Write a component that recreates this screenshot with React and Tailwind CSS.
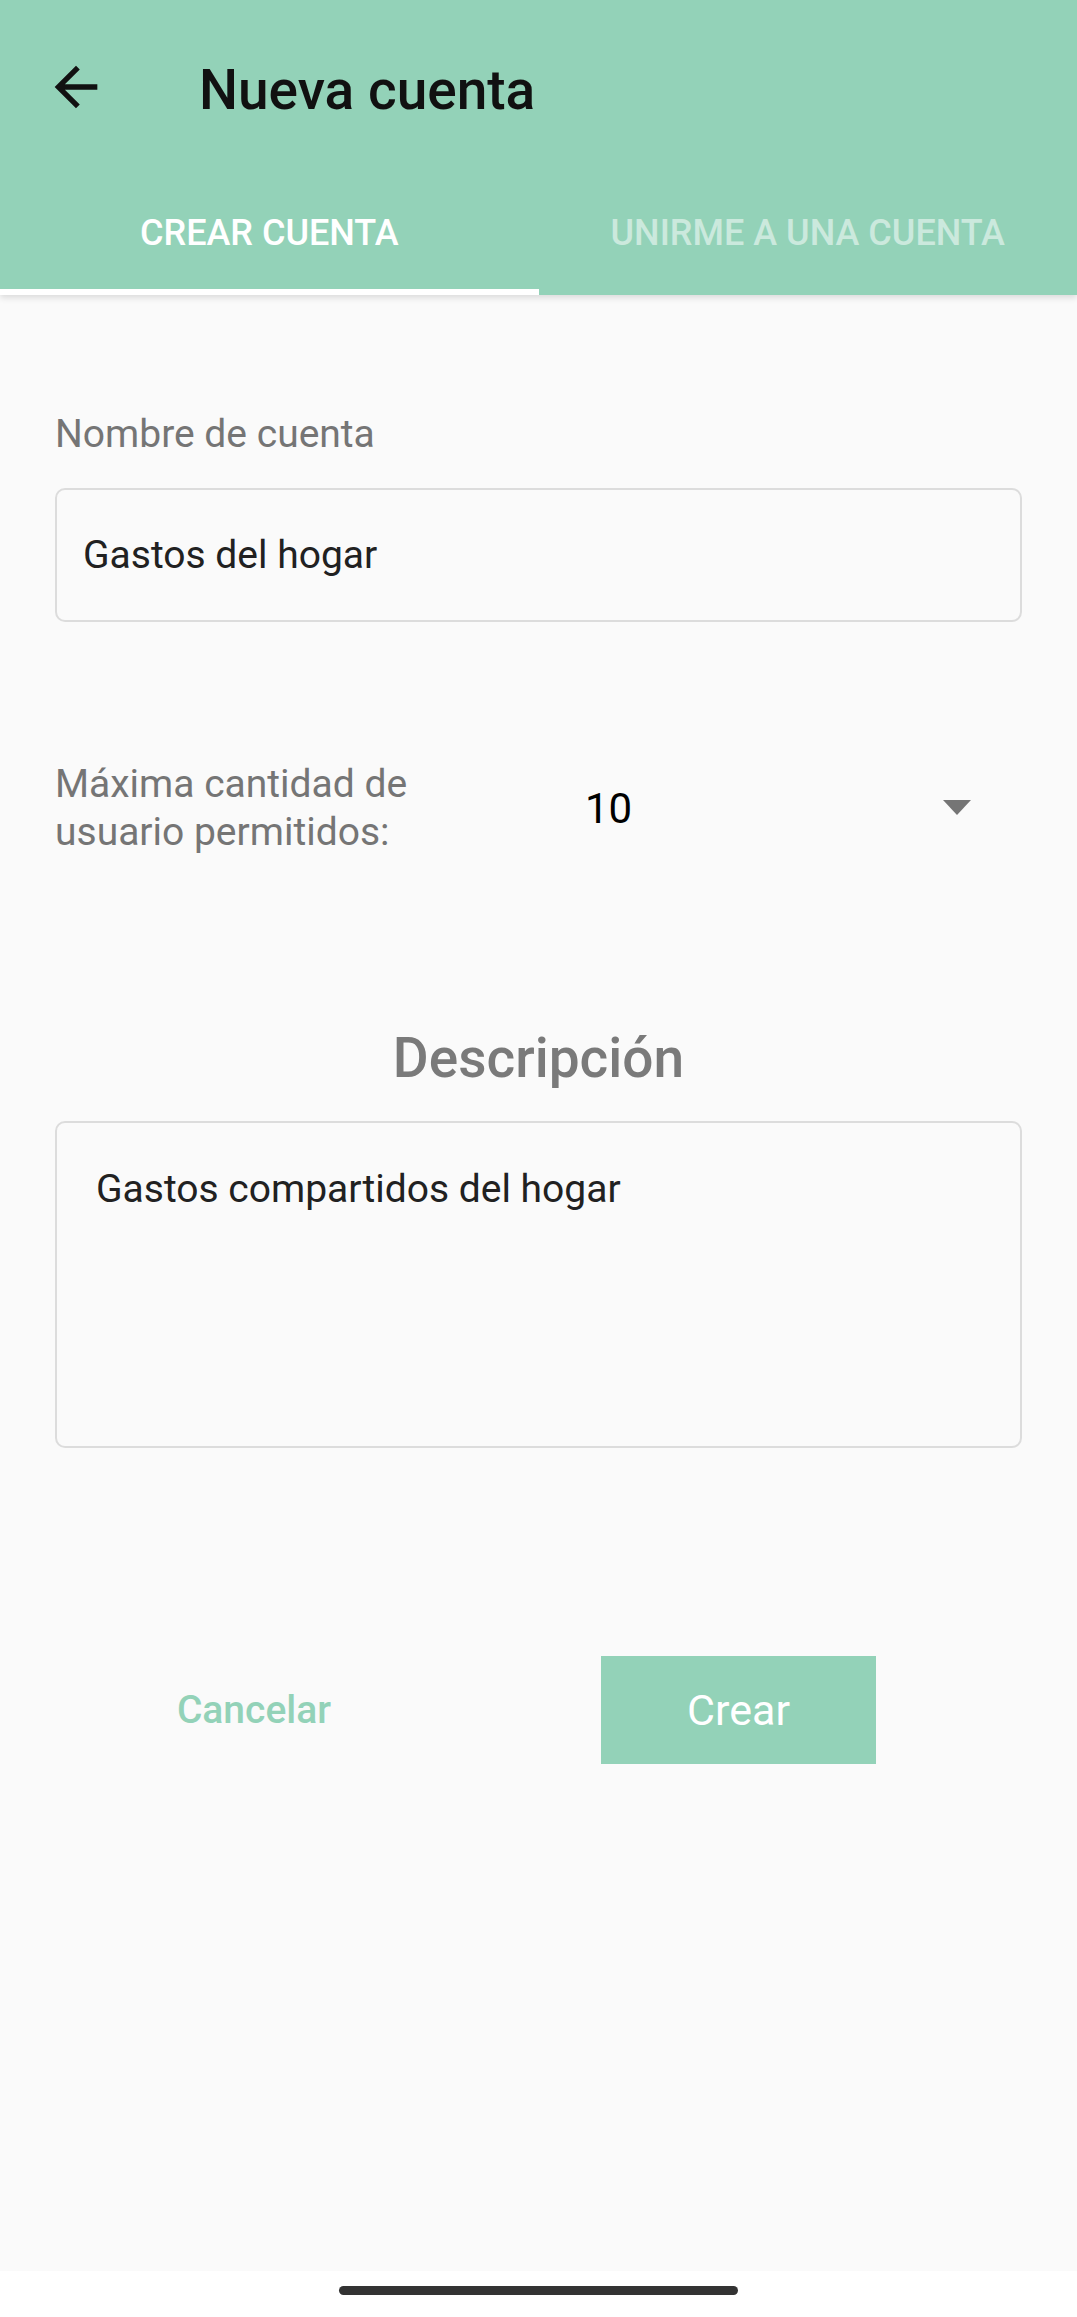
export default function App() {
  return (
    <div
      className="w-[1077px] h-[2317px] flex flex-col bg-white"
      style={{ fontFamily: 'Roboto, "Noto Sans", sans-serif' }}
    >
      {/* app bar + tabs */}
      <div className="bg-[#93d2b8] shadow-[0_3px_6px_rgba(0,0,0,0.12)] relative z-10">
        <div className="h-[174px] flex items-center pl-[44px]">
          <svg width="64" height="64" viewBox="0 0 24 24" className="text-[#111]">
            <path
              fill="currentColor"
              d="M20 11H7.83l5.59-5.59L12 4l-8 8 8 8 1.41-1.41L7.83 13H20v-2z"
            />
          </svg>
          <h1 className="ml-[91px] mt-[6px] text-[55px] font-medium text-[#111] leading-none">Nueva cuenta</h1>
        </div>
        <div className="flex h-[121px]">
          <div className="flex-1 flex flex-col">
            <div className="flex-1 flex items-center justify-center text-[36px] font-medium text-white pt-[2px]">
              CREAR CUENTA
            </div>
            <div className="h-[6px] bg-white" />
          </div>
          <div className="flex-1 flex flex-col">
            <div className="flex-1 flex items-center justify-center text-[36px] font-medium text-[#cbe9dd] pt-[2px]">
              UNIRME A UNA CUENTA
            </div>
            <div className="h-[6px]" />
          </div>
        </div>
      </div>

      {/* form */}
      <div className="flex-1 bg-[#fafafa] px-[55px] flex flex-col">
        <label className="mt-[115px] text-[39px] leading-[48px] text-[#757575]">Nombre de cuenta</label>
        <div className="mt-[30px] h-[134px] border-2 border-[#dcdcdc] rounded-[10px] flex items-center pl-[26px] text-[39px] text-[#212121]">
          Gastos del hogar
        </div>

        <div className="mt-[138px] flex items-center">
          <div className="w-[530px] text-[39px] leading-[48px] text-[#757575]">
            Máxima cantidad de
            <br />
            usuario permitidos:
          </div>
          <div className="flex-1 flex items-center justify-between pr-[51px]">
            <span className="text-[42px] text-black">10</span>
            <svg width="28" height="16" viewBox="0 0 28 16">
              <path d="M0 0h28L14 15z" fill="#757575" />
            </svg>
          </div>
        </div>

        <h2 className="mt-[170px] text-center text-[55px] leading-[64px] font-medium text-[#7a7a7a]">Descripción</h2>
        <div className="mt-[31px] h-[327px] border-2 border-[#dcdcdc] rounded-[10px] pl-[39px] pt-[42px] text-[39px] leading-[48px] text-[#212121]">
          Gastos compartidos del hogar
        </div>

        <div className="mt-[208px] flex items-center">
          <button className="w-[398px] text-center text-[39px] font-medium text-[#93d2b8]">Cancelar</button>
          <button className="ml-[148px] w-[275px] h-[108px] bg-[#93d2b8] text-white text-[43px]">Crear</button>
        </div>
      </div>

      {/* nav bar */}
      <div className="h-[46px] bg-white flex justify-center pt-[15px]">
        <div className="w-[399px] h-[9px] rounded-full bg-[#333]" />
      </div>
    </div>
  )
}
